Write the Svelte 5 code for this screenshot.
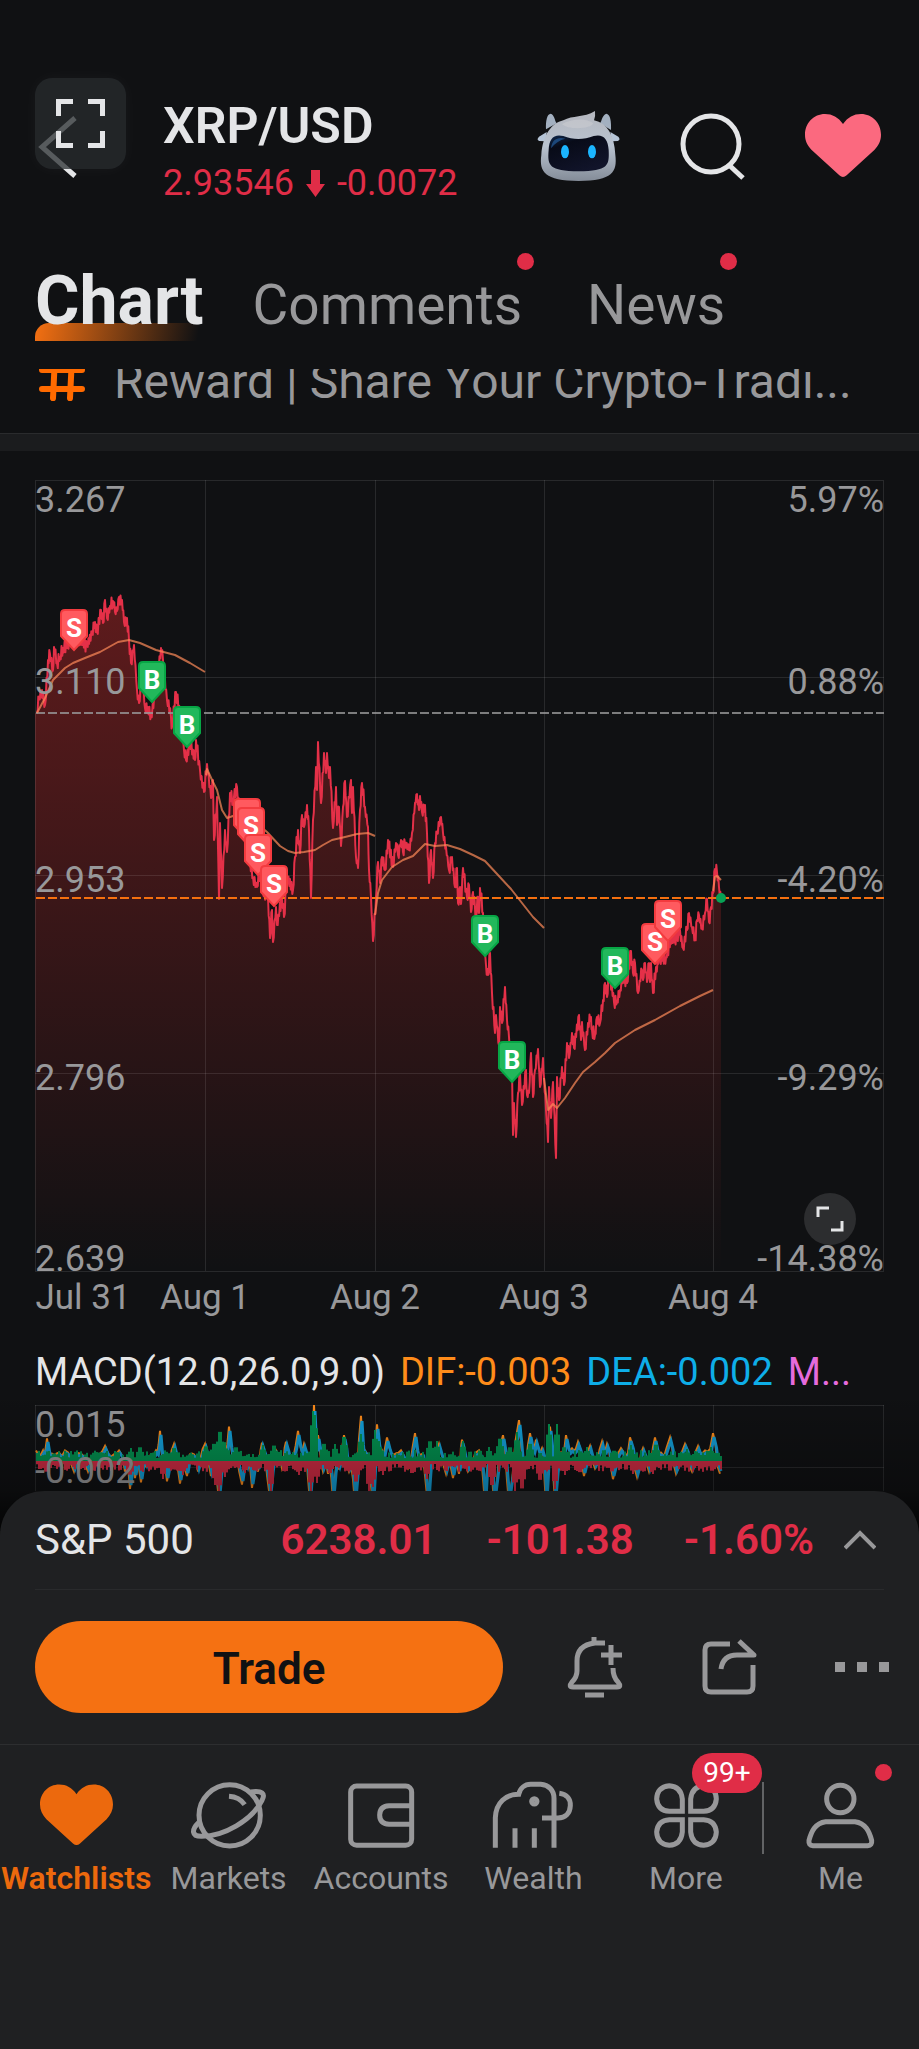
<script>
    const tabs = [
        { name: "Chart", active: true },
        { name: "Comments", dot: true },
        { name: "News", dot: true },
    ];

    const grid_x = [35, 205, 375, 544, 713, 884];
    const grid_y = [480, 677, 875, 1073, 1271];

    const axis = [
        { y: 512, price: "3.267", pct: "5.97%" },
        { y: 694, price: "3.110", pct: "0.88%" },
        { y: 892, price: "2.953", pct: "-4.20%" },
        { y: 1090, price: "2.796", pct: "-9.29%" },
        { y: 1271, price: "2.639", pct: "-14.38%" },
    ];

    const dates = [
        { x: 83, label: "Jul 31" },
        { x: 205, label: "Aug 1" },
        { x: 375, label: "Aug 2" },
        { x: 544, label: "Aug 3" },
        { x: 713, label: "Aug 4" },
    ];

    // turning points of the price, "x,y" in chart units
    const price = `37,713 39,698 42,690 45,705 48,660 50,654 53,670 54,647 57,663 60,657 63,648 74,637 87,646 92,633 95,622
        97,632 101,610 103,623 105,600 107,618 110,606 113,601 115,612 117,611 119,597 122,600 124,622 127,618 129,640 131,663
        134,645 137,690 139,703 142,673 145,708 151,715 155,693 161,648 163,660 167,700 171,717 172,727 176,692 180,713 184,750
        186,760 190,743 195,760 196,740 200,770 204,792 207,764 211,798 213,780 214,840 217,797 219,899 220,823 222,888 225,830
        227,852 230,793 233,800 237,787 240,813 245,843 250,860 253,877 257,887 260,870 263,893 268,897 270,938 272,910 273,942
        276,907 277,925 282,897 284,917 287,877 293,890 295,857 298,830 300,853 302,815 304,827 307,805 309,830 311,898 313,820
        316,767 317,790 318,742 321,803 324,753 326,773 327,753 329,778 330,767 333,828 336,787 337,825 339,807 341,846 343,807
        345,781 347,817 351,780 352,813 353,787 356,857 358,868 360,810 362,783 365,807 368,827 369,870 371,897 373,941 376,897
        378,862 380,883 382,857 385,870 388,840 393,867 396,843 398,855 401,840 403,852 405,843 409,850 412,833 415,803 417,794
        419,810 420,796 422,812 425,805 427,833 429,883 431,850 433,878 435,843 437,833 441,817 443,833 446,847 449,870 452,857
        455,887 457,868 458,903 460,887 461,904 463,868 467,898 469,885 471,912 473,892 476,915 478,897 479,913 480,888 483,913
        486,965 488,975 490,953 492,993 495,1033 496,1015 499,1045 500,1007 502,1023 505,987 507,1020 509,1037 512,1067 513,1135
        514,1103 516,1137 518,1093 520,1073 522,1105 526,1070 527,1095 529,1093 531,1053 533,1097 535,1070 538,1049 540,1087
        543,1058 544,1077 546,1110 548,1142 549,1087 551,1118 553,1082 556,1158 557,1077 559,1100 562,1067 564,1085 567,1043
        569,1058 572,1033 574,1048 579,1015 581,1040 582,1022 585,1050 588,1023 591,1017 592,1030 595,1035 597,1017 600,1023
        603,1000 605,983 607,997 609,973 614,1002 617,1002 620,990 623,978 627,983 631,951 633,973 635,963 638,993 642,970
        643,980 645,963 647,982 649,963 650,982 651,963 653,993 656,967 660,957 666,958 672,937 677,938 680,930 683,948 687,930
        689,913 692,927 695,940 697,920 699,915 702,927 705,913 707,899 709,922 711,907 713,893 715,869 717,872 719,887 721,897`
        .split(/\s+/)
        .map(p => p.split(",").map(Number));

    const averages = [
        "37,713 45,698 53,680 65,668 73,663 85,658 100,652 118,642 129,640 140,643 156,650 175,655 190,663 205,672",
        "206,775 207,769 213,782 217,790 222,810 227,818 233,816 245,813 267,832 280,846 288,851 295,853 304,852 315,850 323,845 332,840 345,837 357,834 368,833 375,836",
        "375,915 378,893 382,880 392,867 403,860 413,856 419,850 425,844 435,846 447,845 460,849 473,855 485,861 498,875 511,889 522,903 533,917 544,928",
        "544,1078 548,1110 553,1104 557,1108 565,1098 575,1083 583,1072 595,1062 605,1053 615,1043 635,1030 655,1020 680,1006 700,996 713,990",
        "713,891 715,877 717,876 721,880",
    ];

    const markers = [
        { side: "S", x: 247, y: 798 },
        { side: "S", x: 251, y: 807 },
        { side: "S", x: 258, y: 834 },
        { side: "S", x: 274, y: 865 },
        { side: "S", x: 74, y: 609 },
        { side: "B", x: 152, y: 661 },
        { side: "B", x: 187, y: 706 },
        { side: "B", x: 485, y: 915 },
        { side: "B", x: 512, y: 1041 },
        { side: "B", x: 615, y: 947 },
        { side: "S", x: 655, y: 923 },
        { side: "S", x: 668, y: 900 },
    ];

    // small seeded generator, so that the ticks are the same on every render
    let seed = 7;
    const random = () => {
        seed = (seed * 16807) % 2147483647;
        return seed / 2147483647;
    };

    // fill the gaps between the turning points with ticks
    const ticks = [];
    price.forEach(([x, y], i) => {
        ticks.push([x, y]);
        const next = price[i + 1];
        if (!next) return;
        const steps = Math.max(2, Math.round((next[0] - x) * 1.3));
        for (let s = 1; s < steps; s++) {
            const t = s / steps;
            const jitter = (s % 2 ? 1 : -1) * (2 + random() * 5);
            ticks.push([x + (next[0] - x) * t, y + (next[1] - y) * t + jitter]);
        }
    });
    const line = ticks.map(([x, y]) => `${x.toFixed(1)},${y.toFixed(1)}`).join(" ");
    const area = `35,1271 35,713 ${line} 721,1271`;

    // macd: spikes are [x, height] from the zero line
    const zero = 1461;
    const green_spikes = [[220, 34], [224, 22], [214, 20], [131, 13], [140, 16], [174, 15], [206, 17], [236, 16], [263, 16], [274, 18], [313, 50], [315, 46], [324, 20], [335, 17], [344, 28], [361, 27], [375, 31], [379, 20], [430, 23], [437, 20], [463, 20], [489, 14], [500, 26], [510, 16], [517, 29], [530, 20], [549, 37], [557, 37], [564, 16], [587, 14], [614, 12], [631, 16], [656, 19], [687, 12], [711, 14]];
    const red_spikes = [[130, 16], [163, 18], [183, 14], [215, 24], [219, 34], [225, 16], [245, 12], [271, 32], [299, 14], [311, 30], [317, 22], [330, 14], [356, 24], [369, 32], [373, 26], [383, 14], [412, 14], [427, 18], [492, 28], [515, 30], [522, 32], [540, 22], [555, 28], [565, 14], [580, 13], [612, 12], [633, 13], [653, 13], [700, 9]];
    const wave_points = [[37, 8], [44, 8], [48, 19], [53, 5], [60, 6], [66, 8], [75, -8], [82, 5], [89, -8], [97, 5], [106, 12], [112, 2], [120, 8], [126, -8], [131, -24], [136, -14], [142, -18], [147, -4], [152, 4], [157, 8], [161, 26], [164, 4], [168, -17], [175, 14], [181, -19], [188, -12], [193, 5], [199, -8], [206, 14], [212, -12], [220, -34], [225, 4], [230, 30], [235, 6], [243, -20], [248, -6], [253, -23], [259, -8], [263, 15], [271, -33], [277, 8], [283, -5], [287, 16], [292, 3], [299, 26], [305, 14], [311, -36], [315, 50], [319, 22], [324, -8], [329, -10], [334, -36], [340, -6], [345, 22], [350, -8], [356, -38], [362, 40], [366, 8], [374, -40], [378, 32], [383, 8], [388, 20], [395, 4], [402, 8], [409, -5], [416, 24], [421, 4], [429, -40], [434, 6], [440, 14], [447, -10], [454, -14], [460, -10], [463, 18], [469, -8], [480, 8], [486, -38], [490, -8], [495, -40], [504, 22], [510, -38], [520, 36], [525, -8], [531, 24], [537, 18], [543, 10], [547, -40], [551, 30], [556, -36], [562, 6], [567, 22], [573, 10], [579, 16], [585, -12], [591, 12], [596, -5], [603, 16], [608, 14], [614, -15], [622, 10], [627, 4], [631, 20], [638, -13], [644, 10], [650, -8], [656, 20], [662, 6], [671, 20], [677, -10], [686, 14], [693, -8], [699, 12], [706, 8], [714, 24], [721, -10]];

    // the wave falls back towards zero on both sides of a peak
    const wave = [];
    wave_points.forEach(([x, h], i) => {
        wave.push([x, h]);
        const next = wave_points[i + 1];
        if (!next) return;
        const gap = next[0] - x;
        wave.push([x + gap * 0.35, h * 0.4 + random() * 4]);
        wave.push([x + gap * 0.65, next[1] * 0.4 + random() * 4]);
    });
    const wave_line = (shift, scale, extra) =>
        wave
            .map(([x, h]) => `${(x + shift).toFixed(1)},${(zero - h * scale - Math.sign(h) * extra).toFixed(1)}`)
            .join(" ");
    const dea = wave_line(0, 1, 0);
    const dif = wave_line(-1, 1.08, 2);

    const bar_height = (x, spikes) => {
        let height = 3 + random() * 8;
        for (const [sx, sh] of spikes) {
            const d = Math.abs(sx - x);
            if (d < 4) height = Math.max(height, sh * (1 - d / 7));
        }
        return height;
    };

    const bars = [];
    for (let x = 37; x <= 722; x += 2) {
        bars.push({ x, up: bar_height(x, green_spikes), down: bar_height(x, red_spikes) });
    }
</script>

{#snippet heart(width, fill)}
    <svg {width} viewBox="0 0 228 190" aria-hidden="true">
        <path {fill} stroke="none" d="M114 30C100 10 82 0 60 0C26 0 0 27 0 62C0 80 7 94 20 108L103 184Q114 194 125 184L208 108C221 94 228 80 228 62C228 27 202 0 168 0C146 0 128 10 114 30Z" />
    </svg>
{/snippet}

<div class="app">
    <header>
        <button class="back" aria-label="Back">
            <svg width="40" height="66" viewBox="0 0 40 66" fill="none" stroke="#e4e5e7" stroke-width="5">
                <path d="M37 4L4 33L37 62" />
            </svg>
        </button>
        <button class="scan" aria-label="Capture screen">
            <svg width="49" height="49" viewBox="0 0 49 49" fill="none" stroke="#e4e5e7" stroke-width="5">
                <path d="M2.500 17V2.500H17M32 2.500H46.500V17M46.500 32V46.500H32M17 46.500H2.500V32" />
            </svg>
        </button>
        <div class="pair">
            <h1>XRP/USD</h1>
            <div class="quote">
                <span>2.93546</span>
                <svg width="19" height="27" viewBox="0 0 19 27" fill="currentColor"><path d="M5 0H14V14H19L9.500 27L0 14H5Z" /></svg>
                <span>-0.0072</span>
            </div>
        </div>
        <div class="actions">
            <button aria-label="Assistant">
                <svg width="84" height="72" viewBox="115 150 252 216">
                    <defs>
                        <linearGradient id="shell" x1="0" y1="0" x2="0" y2="1">
                            <stop offset="0" stop-color="#b4b6bd" />
                            <stop offset="0.5" stop-color="#b9c3d0" />
                            <stop offset="1" stop-color="#848c98" />
                        </linearGradient>
                        <linearGradient id="visor" x1="0" y1="0" x2="0.6" y2="1">
                            <stop offset="0" stop-color="#102a50" />
                            <stop offset="0.3" stop-color="#080b18" />
                            <stop offset="1" stop-color="#11142a" />
                        </linearGradient>
                    </defs>
                    <path fill="#a3b0c0" d="M142 208C141 182 145 162 156 161C167 163 168 182 174 190ZM337 210C338 184 335 164 324 161C311 163 310 182 304 190Z" />
                    <path fill="#b5c4d6" d="M144 216L121 230Q112 240 122 243L142 244ZM335 216L359 230Q367 240 357 243L340 244Z" />
                    <path fill="url(#shell)" d="M194 181C222 165 255 174 289 153Q291 170 286 181C326 190 347 225 350 285C356 336 342 362 240 363C138 362 121 336 128 285C132 225 158 190 194 181Z" />
                    <path fill="#c9cbd0" opacity="0.6" d="M190 192C222 174 265 174 284 190C278 208 205 210 190 192Z" />
                    <path fill="url(#visor)" d="M150 270C151 235 166 221 194 228C224 240 256 239 285 228C313 221 328 236 330 270C332 318 329 332 240 334C151 332 146 318 150 270Z" />
                    <path fill="#245c9b" opacity="0.7" d="M157 265C160 240 175 230 200 236C183 240 168 250 157 265Z" />
                    <ellipse cx="199" cy="275" rx="12" ry="20" fill="#1bb5ff" />
                    <ellipse cx="280" cy="275" rx="12" ry="20" fill="#1bb5ff" />
                </svg>
            </button>
            <button aria-label="Search">
                <svg width="66" height="68" viewBox="0 0 66 68" fill="none" stroke="#e4e5e7" stroke-width="5">
                    <circle cx="31" cy="32" r="28" />
                    <path d="M49 53L63 66" />
                </svg>
            </button>
            <button aria-label="Remove from watchlist">{@render heart(76, "#fb697f")}</button>
        </div>
    </header>

    <nav class="tabs">
        {#each tabs as tab}
            <button class="tab" class:active={tab.active}>
                {tab.name}
                {#if tab.dot}<i class="dot"></i>{/if}
            </button>
        {/each}
    </nav>

    <a class="reward" href="#reward">
        <svg width="48" height="44" viewBox="0 0 48 44" fill="none" stroke="#ff6a00" stroke-width="6" stroke-linecap="round">
            <path d="M4 5H44M4 24H44M17 -8L15 33M34 -8L32 33" />
        </svg>
        <span>Reward | Share Your Crypto-Tradi...</span>
    </a>
    <div class="band"></div>

    <section class="charts">
        <div class="plot">
            <svg viewBox="35 480 849 850" role="img" aria-label="XRP/USD price, Jul 31 to Aug 4">
                <defs>
                    <linearGradient id="fade" gradientUnits="userSpaceOnUse" x1="0" y1="594" x2="0" y2="1271">
                        <stop offset="0" stop-color="#ff2f2f" stop-opacity="0.33" />
                        <stop offset="1" stop-color="#ff2f2f" stop-opacity="0" />
                    </linearGradient>
                </defs>
                <polygon points={area} fill="url(#fade)" />
                <g class="grid">
                    <rect x="35.500" y="480.500" width="848" height="791" fill="none" />
                    {#each grid_x.slice(1, -1) as x}
                        <line x1={x + 0.5} x2={x + 0.5} y1="480" y2="1271" />
                    {/each}
                    {#each grid_y.slice(1, -1) as y}
                        <line x1="35" x2="884" y1={y + 0.5} y2={y + 0.5} />
                    {/each}
                </g>
                <polyline points={line} fill="none" stroke="#e43048" stroke-width="2" stroke-linejoin="round" />
                <line x1="36" x2="884" y1="713" y2="713" stroke="#98989a" stroke-opacity="0.8" stroke-width="2" stroke-dasharray="9 3" />
                <line x1="36" x2="884" y1="898" y2="898" stroke="#f5700f" stroke-width="2" stroke-dasharray="9 3" />
                {#each averages as points}
                    <polyline {points} fill="none" stroke="#ff8c5a" stroke-opacity="0.7" stroke-width="2" stroke-linejoin="round" />
                {/each}
                <circle cx="721" cy="898" r="5" fill="#08a155" />
                <g class="axis">
                    {#each axis as row}
                        <text x="35" y={row.y}>{row.price}</text>
                        <text x="884" y={row.y} text-anchor="end">{row.pct}</text>
                    {/each}
                </g>
                <g class="axis dates">
                    {#each dates as date}
                        <text x={date.x} y="1309">{date.label}</text>
                    {/each}
                </g>
                {#each markers as m}
                    <g class="marker" transform="translate({m.x} {m.y})">
                        <path
                            d="M-9 1H9Q13 1 13 5V27L0 41L-13 27V5Q-13 1 -9 1Z"
                            fill={m.side === "S" ? "#ff5a5f" : "#22b85b"}
                            stroke={m.side === "S" ? "#f33b3f" : "#07a645"}
                            stroke-width="2" />
                        <text y="28">{m.side}</text>
                    </g>
                {/each}
            </svg>
            <button class="expand" aria-label="Full screen">
                <svg width="28" height="28" viewBox="0 0 28 28" fill="none" stroke="#e4e5e7" stroke-width="3">
                    <path d="M2 12V3H13M26 16V25H15" />
                </svg>
            </button>
        </div>

        <div class="legend">
            <span>MACD(12.0,26.0,9.0)</span>
            <span class="dif">DIF:-0.003</span>
            <span class="dea">DEA:-0.002</span>
            <span class="hist">M...</span>
        </div>

        <svg class="macd" viewBox="35 1405 849 86" role="img" aria-label="MACD">
            <g class="grid">
                <line x1="35" x2="884" y1="1405.500" y2="1405.500" />
                <line x1="35" x2="884" y1="1467.500" y2="1467.500" />
                {#each grid_x as x, i}
                    <line x1={i === 5 ? 883.5 : x + 0.5} x2={i === 5 ? 883.5 : x + 0.5} y1="1405" y2="1491" />
                {/each}
            </g>
            <polyline points={dif} fill="none" stroke="#ff8c1a" stroke-width="2" />
            <polyline points={dea} fill="none" stroke="#139fd8" stroke-width="3" />
            {#each bars as bar}
                <rect x={bar.x - 1} y={zero - bar.up} width="2" height={bar.up} fill="#039150" />
                <rect x={bar.x - 1} y={zero} width="2" height={bar.down} fill="#d02c44" />
            {/each}
            <g class="axis">
                <text x="35" y="1437">0.015</text>
                <text x="35" y="1483">-0.002</text>
            </g>
        </svg>
    </section>

    <div class="sheet">
        <div class="index">
            <span class="name">S&amp;P 500</span>
            <span class="down">6238.01</span>
            <span class="down">-101.38</span>
            <span class="down last">-1.60%</span>
            <button aria-label="Show indices">
                <svg width="32" height="20" viewBox="0 0 32 20" fill="none" stroke="#98989a" stroke-width="4">
                    <path d="M1 18L16 3L31 18" />
                </svg>
            </button>
        </div>

        <div class="trade-row">
            <button class="trade">Trade</button>
            <div class="tools">
                <button aria-label="Add alert">
                    <svg width="60" height="62" viewBox="0 0 60 62" fill="none" stroke="currentColor" stroke-width="5">
                        <path d="M40 7H30Q12 9 12 25V35Q12 41 7 46Q3 51 8 51H52Q57 51 53 46Q48 41 48 32" stroke-linejoin="round" />
                        <path d="M29 1V8M20 59H39M46 9V29M36 19H57" />
                    </svg>
                </button>
                <button aria-label="Share">
                    <svg width="58" height="58" viewBox="0 0 58 58" fill="none" stroke="currentColor" stroke-width="5">
                        <path d="M29 6H10Q4 6 4 12V48Q4 54 10 54H46Q52 54 52 48V27" />
                        <path d="M20 31Q22 17 36 17H53L38 3" stroke-linejoin="round" />
                    </svg>
                </button>
                <button aria-label="More actions">
                    <svg width="54" height="10" viewBox="0 0 54 10" fill="currentColor">
                        <path d="M0 0H10V10H0ZM22 0H32V10H22ZM44 0H54V10H44Z" />
                    </svg>
                </button>
            </div>
        </div>

        <nav class="nav">
            <a class="current" href="#watchlists">
                {@render heart(73, "currentColor")}
                Watchlists
            </a>
            <a href="#markets">
                <svg viewBox="565 108 236 228">
                    <circle cx="687" cy="223" r="92" />
                    <path d="M685 166Q716 168 732 191" />
                    <path d="M750 153C785 148 795 158 784 178C755 238 668 286 604 286C572 287 572 266 594 245" />
                </svg>
                Markets
            </a>
            <a href="#accounts">
                <svg viewBox="1025 108 236 228">
                    <rect x="1051" y="135" width="183" height="178" rx="18" />
                    <path d="M1234 194H1166Q1138 196 1138 222Q1138 248 1166 250H1234" />
                </svg>
                Accounts
            </a>
            <a href="#wealth">
                <svg viewBox="95 108 252 228">
                    <path d="M108 320V230C110 184 140 160 178 160C182 142 196 130 214 130H244C268 132 284 148 284 172V320M167 262V320M225 262V320" />
                    <path d="M300 157C324 160 334 176 333 194C332 218 318 231 296 231H248" />
                    <circle cx="225" cy="181" r="8" />
                </svg>
                Wealth
            </a>
            <a href="#more">
                <svg viewBox="558 108 236 228">
                    <path d="M664 211V174Q660 136 625 134Q588 138 587 174Q590 209 625 211ZM689 211V174Q693 136 728 134Q765 138 766 174Q763 209 728 211ZM664 236V273Q660 311 625 313Q588 309 587 273Q590 238 625 236ZM689 236V273Q693 311 728 313Q765 309 766 273Q763 238 728 236Z" />
                </svg>
                More
                <span class="badge">99+</span>
            </a>
            <a class="last" href="#me">
                <svg viewBox="1028 108 236 228">
                    <circle cx="1146" cy="174" r="41" />
                    <path d="M1102 242H1190C1222 246 1233 272 1240 298Q1242 313 1228 314H1064Q1050 313 1052 298C1059 272 1070 246 1102 242Z" />
                </svg>
                Me
                <i class="dot"></i>
            </a>
        </nav>
    </div>
</div>

<style>
    :global(body) {
        background: #101113;
    }
    .app {
        display: flex;
        flex-direction: column;
        min-height: 100vh;
        font-family: Roboto, "Noto Sans", sans-serif;
        color: #e4e5e7;
        background: #101113;
        overflow: hidden;
    }
    button {
        padding: 0;
        border: none;
        background: none;
        color: inherit;
        font-family: inherit;
    }
    svg {
        display: block;
    }

    header {
        position: relative;
        display: flex;
        align-items: flex-start;
        height: 134px;
        padding: 96px 35px 0 38px;
    }
    .back {
        width: 40px;
        margin: 18px 85px 0 0;
    }
    .scan {
        position: absolute;
        top: 78px;
        left: 35px;
        display: grid;
        place-items: center;
        width: 91px;
        height: 91px;
        border-radius: 17px;
        background: rgba(40, 44, 47, 0.75);
        box-shadow: 0 0 16px rgba(255, 255, 255, 0.04);
    }
    .pair {
        flex: 1;
    }
    h1 {
        margin: 0;
        font-size: 50px;
        line-height: 61px;
        font-weight: 600;
    }
    .quote {
        display: flex;
        align-items: center;
        gap: 12px;
        font-size: 36px;
        line-height: 52px;
        color: #e02d47;
    }
    .actions {
        display: flex;
        align-items: center;
        gap: 59px;
        padding: 14px 3px 0 0;
    }

    .tabs {
        display: flex;
        align-items: baseline;
        gap: 49px;
        height: 139px;
        padding: 0 35px;
        box-sizing: border-box;
    }
    .tab {
        position: relative;
        font-size: 55px;
        line-height: 142px;
        color: #98989a;
    }
    .tab:last-child {
        margin-left: 16px;
    }
    .tab.active {
        z-index: 0;
        font-size: 68px;
        font-weight: 700;
        color: #e4e5e7;
    }
    .tab.active::after {
        content: "";
        position: absolute;
        z-index: -1;
        left: 0;
        right: 0;
        top: 93px;
        height: 18px;
        border-top-left-radius: 14px;
        background: linear-gradient(100deg, #f47012, rgba(244, 112, 18, 0) 96%);
    }
    .dot {
        position: absolute;
        width: 17px;
        height: 17px;
        border-radius: 50%;
        background: #e02d47;
    }
    .tab .dot {
        top: 19px;
        right: -12px;
    }

    .reward {
        display: flex;
        align-items: flex-end;
        gap: 28px;
        height: 52px;
        padding: 0 35px 12px 38px;
        box-sizing: border-box;
        overflow: hidden;
        font-size: 48px;
        line-height: 54px;
        color: #98989a;
        text-decoration: none;
        white-space: nowrap;
    }
    .reward svg {
        flex: none;
    }
    .band {
        height: 17px;
        margin-top: 12px;
        border-top: 1px solid #2a2b2d;
        background: #1b1c1e;
    }

    .charts {
        position: relative;
        padding: 29px 35px 0;
    }
    .charts::after {
        content: "";
        position: absolute;
        left: 0;
        right: 0;
        bottom: -40px;
        height: 140px;
        background: linear-gradient(rgba(0, 0, 0, 0), rgba(0, 0, 0, 0.3) 70%, rgba(0, 0, 0, 0.8));
        pointer-events: none;
    }
    .plot {
        position: relative;
    }
    .plot > svg,
    .macd {
        width: 100%;
        height: auto;
    }
    .grid line,
    .grid rect {
        stroke: #fff;
        stroke-opacity: 0.1;
        stroke-width: 1;
    }
    .axis {
        font-size: 36px;
        fill: #98989a;
    }
    .dates {
        font-size: 35px;
        text-anchor: middle;
    }
    .marker {
        font-size: 26px;
        font-weight: 700;
        text-anchor: middle;
        fill: #fff;
    }
    .expand {
        position: absolute;
        right: 28px;
        bottom: 85px;
        display: grid;
        place-items: center;
        width: 52px;
        height: 52px;
        border-radius: 50%;
        background: #2c2d2f;
    }
    .legend {
        display: flex;
        gap: 15px;
        margin: 17px 0 8px;
        font-size: 38px;
        line-height: 50px;
        white-space: nowrap;
        overflow: hidden;
    }
    .dif {
        color: #ff8c1a;
    }
    .dea {
        color: #0eaee8;
    }
    .hist {
        color: #e56bdc;
    }

    .sheet {
        position: relative;
        flex: 1;
        border-radius: 44px 44px 0 0;
        background: #1f2022;
    }
    .index {
        display: flex;
        align-items: center;
        height: 98px;
        margin: 0 35px;
        padding-right: 8px;
        border-bottom: 1px solid #292a2c;
        font-size: 42px;
        line-height: 52px;
    }
    .index .name {
        flex: 1;
    }
    .index .down {
        margin-right: 50px;
        font-weight: 600;
        color: #e02d47;
    }
    .index .down.last {
        margin-right: 30px;
    }
    .trade-row {
        display: flex;
        align-items: center;
        height: 154px;
        padding: 0 30px 0 35px;
        border-bottom: 1px solid #2d2e30;
        color: #98989a;
    }
    .trade {
        flex: 1;
        height: 92px;
        margin-right: 62px;
        padding-top: 3px;
        border-radius: 46px;
        background: #f57112;
        color: #101113;
        font-size: 44px;
        font-weight: 600;
    }
    .tools {
        display: flex;
        align-items: center;
        gap: 76px;
    }

    .nav {
        display: flex;
        padding-top: 32px;
    }
    .nav a {
        position: relative;
        flex: 1 1 0;
        min-width: 0;
        display: flex;
        flex-direction: column;
        align-items: center;
        gap: 4px;
        font-size: 32px;
        line-height: 42px;
        color: #98989a;
        text-decoration: none;
    }
    .nav a.current {
        color: #ec690d;
        font-weight: 600;
    }
    .nav a.last {
        flex-grow: 1.03;
    }
    .nav svg {
        height: 76px;
        fill: none;
        stroke: currentColor;
        stroke-width: 15;
    }
    .nav .last::before {
        content: "";
        position: absolute;
        left: 0;
        top: 5px;
        width: 2px;
        height: 72px;
        background: #626365;
    }
    .nav .last .dot {
        top: -13px;
        right: 27px;
    }
    .badge {
        position: absolute;
        top: -24px;
        right: 0;
        width: 70px;
        border-radius: 20px;
        background: #e02d47;
        color: #fff;
        font-size: 28px;
        line-height: 40px;
        text-align: center;
    }
</style>
